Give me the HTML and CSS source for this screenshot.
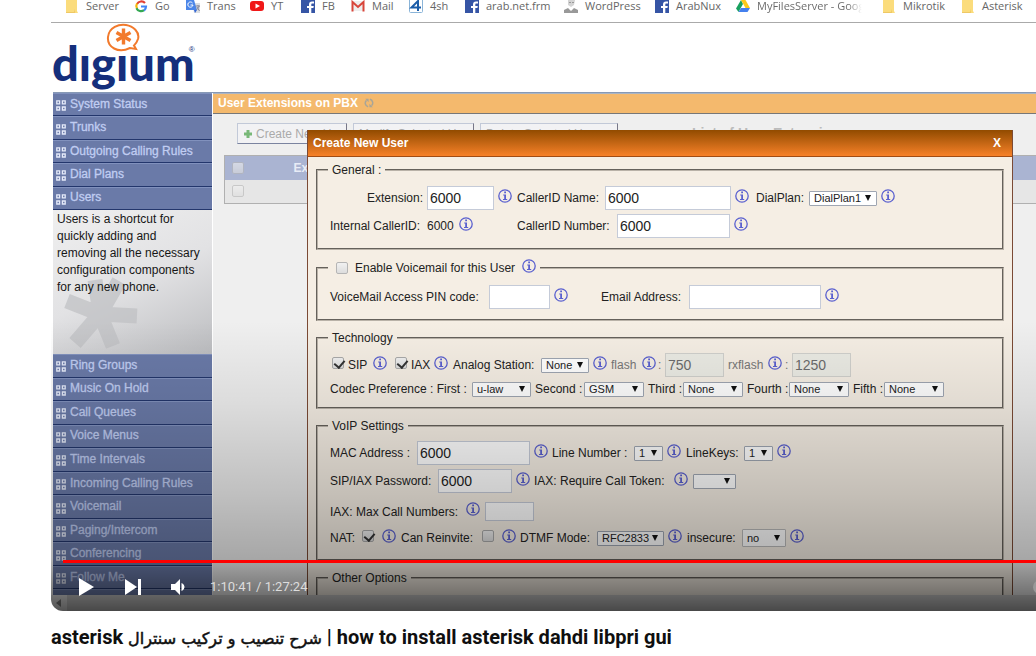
FILE: index.html
```html
<!DOCTYPE html>
<html lang="en">
<head>
<meta charset="utf-8">
<title>asterisk dahdi libpri gui</title>
<link rel="stylesheet" href="styles.css">
</head>
<body>
<svg class="defs" aria-hidden="true">
  <symbol id="info" viewBox="0 0 14 14"><circle cx="7" cy="7" r="6.200" fill="none" stroke="#5a60cf" stroke-width="1.300"/><path d="M6.200 2.600h1.800v1.600H6.200zM5.200 5.400H8v4.700h1.200v1H5v-1h1.200V6.400h-1z" fill="#5a60cf"/></symbol>
  <symbol id="dots" viewBox="0 0 10 11"><path d="M.8 .8h2.800v3H.8zM6.400 .8h2.800v3H6.400zM.8 7h2.800v3H.8zM6.400 7h2.800v3H6.400z" fill="none" stroke="#e6ebfa" stroke-width="1.300"/></symbol>
  <symbol id="folder" viewBox="0 0 14 14"><path d="M1 0h11v11l1 2H1z" fill="#fbdc7c"/><path d="M10 9v4H1V12h8z" fill="#eec865"/></symbol>
  <symbol id="fb" viewBox="0 0 14 14"><path d="M0 0h14v13H0z" fill="#3655a5"/><path d="M8 13V8H6V6h2V4.500C8 2.500 9 1.500 11 1.500h2v2h-1.500c-1 0-1.200.4-1.200 1.200V6h2.500l-.4 2h-2.100v5z" fill="#fff"/></symbol>
</svg>
<main>
<section class="player">
  <div class="screen">
    <nav class="bookmarks">
      <a href="#"><svg><use href="#folder"/></svg>Server</a>
      <a href="#"><svg viewBox="0 0 14 14"><path d="M11 3A5 5 0 0 0 3 4" fill="none" stroke="#e34133" stroke-width="2.200"/><path d="M3 3.500a5 5 0 0 0 0 5" fill="none" stroke="#f5b80b" stroke-width="2.200"/><path d="M2.500 8.200a5 5 0 0 0 7.500 2" fill="none" stroke="#34a853" stroke-width="2.200"/><path d="M7 6.500h5c0 2-.6 3-2 4" fill="none" stroke="#4285f4" stroke-width="2.200"/></svg>Go</a>
      <a href="#"><svg viewBox="0 0 14 14"><path d="M6 3h8v10H8z" fill="#dcdfe3"/><path d="M0 0h8l3 10H0z" fill="#4c86e8"/><path d="M6.500 3A2.600 2.600 0 1 0 7 5H4.500" fill="none" stroke="#fff"/><path d="M8 10h3l-2 3z" fill="#3367d6"/><path d="M9.500 6H14M12 5v1m1 0c0 2-2 3-2.500 4m.5-3 2.500 4" fill="none" stroke="#889"/></svg>Trans</a>
      <a href="#"><svg viewBox="0 0 14 14"><rect y="1" width="14" height="10" rx="3" fill="#f01818"/><path d="M5.500 3.500v5L10 6z" fill="#fff"/></svg>YT</a>
      <a href="#"><svg><use href="#fb"/></svg>FB</a>
      <a href="#"><svg viewBox="0 0 14 14"><path d="M1 1h12v10H1z" fill="#eee"/><path d="M1.500 11.500V2L7 7l5.500-5v9.500" fill="none" stroke="#d8453a" stroke-width="2"/></svg>Mail</a>
      <a href="#"><svg viewBox="0 0 14 14"><rect x=".5" y="-3" width="13" height="15.500" rx="1" fill="#fff" stroke="#8ab4d8"/><path d="M9 11V1L2.500 7.500H12" fill="none" stroke="#1c5da8" stroke-width="2"/></svg>4sh</a>
      <a href="#"><svg><use href="#fb"/></svg>arab.net.frm</a>
      <a href="#"><svg viewBox="0 0 14 14"><path d="M4 0h7l-1 5-3 2-3-2z" fill="#d4d4d4"/><path d="M0 13V10l4-2 3 3 3-3 4 2v3z" fill="#999"/><path d="M5 2.500h2m1 0h2" stroke="#999"/></svg>WordPress</a>
      <a href="#"><svg><use href="#fb"/></svg>ArabNux</a>
      <a href="#"><svg viewBox="0 0 14 14"><path d="M5 0 0 8.500 2.500 12 7 4z" fill="#19a15f"/><path d="M5 0h4.500l4.500 8H9.500z" fill="#fbc91b"/><path d="M5 8h9l-2.500 4h-9z" fill="#4480ee"/></svg><span class="fade">MyFilesServer - Goog</span></a>
      <a href="#"><svg><use href="#folder"/></svg>Mikrotik</a>
      <a href="#"><svg><use href="#folder"/></svg>Asterisk</a>
    </nav>
    <header class="brand">
      <svg class="bubble" viewBox="0 0 34 30"><path d="M24 25C12 31 1 24 2 14S13 1 20 2s14 7 12 14c-1 3-2 5-4 6.500l2 3.500z" fill="#fff" stroke="#f27a2c" stroke-width="2"/><path d="M17.500 5.500v16M10.500 9.500l14 8M10.500 17.500l14-8" stroke="#f27a2c" stroke-width="3.400"/></svg>
      <span class="wordmark">dıgıum</span><span class="reg">®</span>
    </header>
    <div class="app">
      <aside class="sidebar">
        <nav class="menu menu-top">
          <a href="#"><svg><use href="#dots"/></svg>System Status</a>
          <a href="#"><svg><use href="#dots"/></svg>Trunks</a>
          <a href="#"><svg><use href="#dots"/></svg>Outgoing Calling Rules</a>
          <a href="#"><svg><use href="#dots"/></svg>Dial Plans</a>
          <a href="#"><svg><use href="#dots"/></svg>Users</a>
        </nav>
        <div class="about">
          <svg class="star" viewBox="0 0 80 76"><path d="M39 37 58 4M39 37 6 24M39 37l37 2M39 37 14 66M39 37l13 32M39 37 34 3" stroke="#bfc0c3" stroke-width="15"/></svg>
          <p>Users is a shortcut for quickly adding and removing all the necessary configuration components for any new phone.</p>
        </div>
        <nav class="menu menu-rest">
          <a href="#"><svg><use href="#dots"/></svg>Ring Groups</a>
          <a href="#"><svg><use href="#dots"/></svg>Music On Hold</a>
          <a href="#"><svg><use href="#dots"/></svg>Call Queues</a>
          <a href="#"><svg><use href="#dots"/></svg>Voice Menus</a>
          <a href="#"><svg><use href="#dots"/></svg>Time Intervals</a>
          <a href="#"><svg><use href="#dots"/></svg>Incoming Calling Rules</a>
          <a href="#"><svg><use href="#dots"/></svg>Voicemail</a>
          <a href="#"><svg><use href="#dots"/></svg>Paging/Intercom</a>
          <a href="#"><svg><use href="#dots"/></svg>Conferencing</a>
          <a href="#"><svg><use href="#dots"/></svg>Follow Me</a>
          <a href="#"></a>
        </nav>
      </aside>
      <div class="page">
        <h2 class="page-title">User Extensions on PBX <svg viewBox="0 0 12 12"><path d="M5 10.500A4.500 4.500 0 0 1 3 2.800M7 1.500a4.500 4.500 0 0 1 2 7.700" fill="none" stroke="#a9a597" stroke-width="1.800"/><path d="M1.500 1h4v4zM10.500 11h-4V7z" fill="#a9a597"/></svg></h2>
        <div class="toolbar">
          <button type="button"><svg viewBox="0 0 10 10"><path d="M5 1v8M1 5h8" stroke="#78b878" stroke-width="3"/></svg>Create New User</button>
          <button type="button">Modify Selected Users</button>
          <button type="button">Delete Selected Users</button>
          <strong>List of User Extensions</strong>
        </div>
        <table class="list">
          <tr><th><input type="checkbox" aria-label="Select all"></th><th>Extension</th></tr>
          <tr><td><input type="checkbox" aria-label="Select row"></td><td></td></tr>
        </table>
      </div>
    </div>
    <form class="dialog">
      <div class="dialog-bar"><span>Create New User</span><button type="button">X</button></div>
      <fieldset class="general">
        <legend>General :</legend>
        <div class="row g1">
          <label class="right" for="ext">Extension:</label><input id="ext" value="6000"><svg class="info"><use href="#info"/></svg>
          <label for="cname">CallerID Name:</label><input id="cname" value="6000"><svg class="info"><use href="#info"/></svg>
          <label for="dp">DialPlan:</label><span class="pick"><select id="dp"><option>DialPlan1</option></select></span><svg class="info"><use href="#info"/></svg>
        </div>
        <div class="row g2">
          <span>Internal CallerID:</span><span>6000</span><svg class="info"><use href="#info"/></svg>
          <label for="cnum">CallerID Number:</label><input id="cnum" value="6000"><svg class="info"><use href="#info"/></svg>
        </div>
      </fieldset>
      <fieldset class="voicemail">
        <legend><input type="checkbox" id="vm"><label for="vm">Enable Voicemail for this User</label><svg class="info"><use href="#info"/></svg></legend>
        <div class="row v1">
          <label for="pin">VoiceMail Access PIN code:</label><input id="pin"><svg class="info"><use href="#info"/></svg>
          <label for="mail">Email Address:</label><input id="mail"><svg class="info"><use href="#info"/></svg>
        </div>
      </fieldset>
      <fieldset class="tech">
        <legend>Technology</legend>
        <div class="row t1">
          <input type="checkbox" id="sip" checked><label for="sip">SIP</label><svg class="info"><use href="#info"/></svg>
          <input type="checkbox" id="iax" checked><label for="iax">IAX</label><svg class="info"><use href="#info"/></svg>
          <label for="analog">Analog Station:</label><span class="pick"><select id="analog"><option>None</option></select></span><svg class="info"><use href="#info"/></svg>
          <label class="dim" for="flash">flash</label><svg class="info"><use href="#info"/></svg><span class="dim">:</span><input id="flash" value="750" disabled>
          <label class="dim" for="rx">rxflash</label><svg class="info"><use href="#info"/></svg><span class="dim">:</span><input id="rx" value="1250" disabled>
        </div>
        <div class="row short t2">
          <label for="c1">Codec Preference : First :</label><span class="pick"><select id="c1"><option>u-law</option></select></span>
          <label for="c2">Second :</label><span class="pick"><select id="c2"><option>GSM</option></select></span>
          <label for="c3">Third :</label><span class="pick"><select id="c3"><option>None</option></select></span>
          <label for="c4">Fourth :</label><span class="pick"><select id="c4"><option>None</option></select></span>
          <label for="c5">Fifth :</label><span class="pick"><select id="c5"><option>None</option></select></span>
        </div>
      </fieldset>
      <fieldset class="voip">
        <legend>VoIP Settings</legend>
        <div class="row p1">
          <label for="mac">MAC Address :</label><input id="mac" value="6000"><svg class="info"><use href="#info"/></svg>
          <label for="line">Line Number :</label><span class="pick"><select id="line"><option>1</option></select></span><svg class="info"><use href="#info"/></svg>
          <label for="keys">LineKeys:</label><span class="pick"><select id="keys"><option>1</option></select></span><svg class="info"><use href="#info"/></svg>
        </div>
        <div class="row p2">
          <label for="pw">SIP/IAX Password:</label><input id="pw" value="6000"><svg class="info"><use href="#info"/></svg>
          <label for="tok">IAX: Require Call Token:</label><svg class="info"><use href="#info"/></svg><span class="pick"><select id="tok"><option></option></select></span>
        </div>
        <div class="row tall p3">
          <label for="max">IAX: Max Call Numbers:</label><svg class="info"><use href="#info"/></svg><input class="small" id="max">
        </div>
        <div class="row short p4">
          <label for="nat">NAT:</label><input type="checkbox" id="nat" checked><svg class="info"><use href="#info"/></svg>
          <label for="re">Can Reinvite:</label><input type="checkbox" id="re"><svg class="info"><use href="#info"/></svg>
          <label for="dtmf">DTMF Mode:</label><span class="pick"><select id="dtmf"><option>RFC2833</option></select></span><svg class="info"><use href="#info"/></svg>
          <label for="ins">insecure:</label><span class="pick"><select class="high" id="ins"><option>no</option></select></span><svg class="info"><use href="#info"/></svg>
        </div>
      </fieldset>
      <fieldset class="other"><legend>Other Options</legend></fieldset>
    </form>
  </div>
  <div class="scroll"><svg viewBox="0 0 16 16"><path d="M10 4v8L5 8z" fill="#888"/></svg><div></div></div>
  <div class="chrome">
    <div class="progress"></div>
    <div class="controls">
      <button type="button" aria-label="Play"><svg viewBox="0 0 16 18"><path d="M0 0v18l15-9z" fill="#fff"/></svg></button>
      <button type="button" aria-label="Next"><svg viewBox="0 0 16 18"><path d="M0 1v16l12-8zM13 1h3v16h-3z" fill="#fff"/></svg></button>
      <button type="button" aria-label="Mute"><svg viewBox="0 0 16 18"><path d="M0 6h4l5-5v16l-5-5H0zM10.500 5c4 2 4 6 0 8z" fill="#fff"/></svg></button>
      <span class="time">1:10:41 / 1:27:24</span>
      <span class="knob"></span>
    </div>
  </div>
</section>
<h1>asterisk <span lang="ar">شرح تنصيب و تركيب سنترال</span> | how to install asterisk dahdi libpri gui</h1>
</main>
</body>
</html>
```
FILE: styles.css
```css
* { box-sizing: border-box; }
body { margin: 0; background: #fff; font: 12px/16px "Liberation Sans", sans-serif; color: #222; overflow: hidden; }
main { padding-left: 51px; }
a { color: inherit; text-decoration: none; }
button { font: inherit; margin: 0; }
svg { display: block; flex: none; }
.defs { position: absolute; width: 0; height: 0; }

.player { position: relative; display: flex; flex-direction: column; height: calc(100vh - 45px); border-bottom-left-radius: 12px; overflow: hidden; }
.screen { position: relative; flex: 1; min-height: 0; display: flex; flex-direction: column; overflow: hidden; }

.bookmarks { flex: none; display: grid; grid-template-columns: 69px 52px 64px 51px 50px 58px 56px 99px 91px 81px 146px 79px 76px; height: 23px; padding-left: 14px; border-bottom: 1px solid #aaa; font: 11px/12px "Open Sans", sans-serif; color: #666; white-space: nowrap; }
.bookmarks a { display: flex; align-items: flex-start; gap: 7px; height: 14px; }
.bookmarks svg { width: 14px; height: 14px; }
.fade { height: 14px; overflow: hidden; color: transparent; background: linear-gradient(90deg, #666 85%, #fff 98%); background-clip: text; }

.brand { flex: none; position: relative; height: 69px; padding-left: 1px; display: flex; color: #152f7c; }
.wordmark { font: 900 47px/56px Lato, sans-serif; padding-top: 12px; }
.reg { font-size: 8px; line-height: 10px; padding-top: 22px; margin-left: -6px; }
.bubble { position: absolute; left: 55px; top: 0; width: 34px; height: 30px; z-index: 1; }

.app { flex: 1; min-height: 0; display: flex; margin-left: 2px; border-top: 1px solid #8799b5; }
.sidebar { flex: none; width: 160px; border-right: 1px solid #fff; }
.menu { display: flex; flex-direction: column; color: #c0cdf2; -webkit-text-stroke: 0.3px #c0cdf2; }
.menu-top { height: 117px; }
.menu-rest { height: 259px; }
.menu a { flex: 1; display: flex; align-items: center; gap: 4px; padding: 0 0 2px 3px; background: #6a7aa8; border-top: 1px solid #8191bd; border-bottom: 1px solid #23366c; }
.menu svg { width: 10px; height: 11px; margin-top: 4px; }
.about { position: relative; height: 144px; background: linear-gradient(155deg, #efefef, #e2e2e4 50%, #bcbdc0); color: #161616; line-height: 17px; }
.about p { position: relative; margin: 0; padding: 1px 4px; }
.star { position: absolute; left: 8px; top: 67px; width: 80px; height: 76px; opacity: .7; }

.page { flex: 1; min-width: 0; background: #efefef; overflow: hidden; }
.page-title { display: flex; align-items: center; gap: 6px; height: 21px; margin: 0; padding: 0 0 2px 5px; background: #f4b96d; border-top: 1px solid #aab5c4; border-bottom: 1px solid #777; font-size: 12px; color: #fff; }
.page-title svg { width: 10px; height: 10px; }
.toolbar { display: flex; gap: 6px; padding: 9px 0 0 24px; height: 41px; }
.toolbar button { display: flex; align-items: center; gap: 3px; height: 21px; padding: 0 5px; white-space: nowrap; overflow: hidden; color: #aaa; background: #f2f2f4; border: 1px solid #c2c9d8; border-right-color: #778; border-bottom-color: #7b84a0; }
.toolbar button:nth-child(1) { width: 110px; }
.toolbar button:nth-child(2) { width: 121px; }
.toolbar button:nth-child(3) { width: 138px; }
.toolbar svg { width: 10px; height: 10px; }
.toolbar strong { margin-left: 68px; padding-top: 2px; font-size: 14px; color: #bbb; }
.list { width: calc(100% + 20px); margin-left: 11px; border: 1px solid #b0b0b0; border-collapse: collapse; table-layout: fixed; background: #e6e6e6; }
.list th, .list td { height: 24px; padding: 0 7px; text-align: left; }
.list th { background: #aab4d2; color: #e8ecf6; }
.list th:first-child { width: 62px; }
.list input { opacity: .6; }

.dialog { position: absolute; left: 256px; right: 23px; top: 130px; padding: 0 8px; background: #f5eee4; border: 1px solid #7b4a35; border-top: 0; }
.dialog-bar { display: flex; justify-content: space-between; align-items: center; height: 27px; margin: 0 -8px 5px; padding: 0 9px 0 5px; background: linear-gradient(#914b00, #f78128); border-bottom: 1px solid #a14c14; color: #fff; font-weight: bold; }
.dialog-bar button { background: none; border: 0; padding: 0 2px; color: #fff; }
fieldset { margin: 0; padding: 0 12px; border: 2px groove #b9b2a8; min-width: 0; }
legend { display: flex; align-items: center; height: 16px; padding: 0 4px 0 4px; margin-left: -2px; }
.general { padding-top: 6px; padding-bottom: 8px; }
.voicemail { margin-top: 10px; padding-top: 7px; padding-bottom: 8px; }
.voicemail legend { gap: 7px; padding-left: 8px; }
.tech { margin-top: 9px; padding-top: 5px; padding-bottom: 8px; }
.voip { margin-top: 9px; padding-top: 5px; padding-bottom: 11px; }
.other { margin-top: 9px; height: 90px; }

.row { display: grid; column-gap: 4px; align-items: center; height: 28px; white-space: nowrap; }
.row.short { height: 20px; }
.row.tall { height: 33px; }
.g1 { grid-template-columns: 93px 67px 15px 84px 126px 17px 49px 68px 16px; }
.g2 { grid-template-columns: 93px 28px 54px 96px 113px 16px; }
.v1 { grid-template-columns: 155px 61px 43px 84px 132px 16px; }
.t1 { grid-template-columns: 12px 21px 18px 12px 19px 15px 84px 48px 14px 27px 12px 3px 59px 36px 13px 3px 59px; padding-left: 2px; }
.t2 { grid-template-columns: 138px 59px 45px 60px 31px 60px 38px 60px 27px 60px; }
.p1 { grid-template-columns: 83px 113px 14px 78px 29px 15px 54px 29px 15px; }
.p2 { grid-template-columns: 104px 74px 14px 136px 15px 43px; }
.p3 { grid-template-columns: 132px 15px 49px; }
.p4 { grid-template-columns: 28px 16px 15px 77px 16px 14px 73px 67px 15px 51px 44px 15px; }
.right { text-align: right; }
.dim { color: #777; }

.info { width: 14px; height: 14px; margin-bottom: 5px; }
.row input { width: 100%; height: 24px; padding: 0 2px; border: 1px solid #c5cbd8; background: #fff; font: 14px/20px "Liberation Sans", sans-serif; color: #222; }
.row input.small { height: 19px; }
.row input:disabled { background: #ebebe4; color: #6c6c6c; border-color: #d0d0cc; }
input[type="checkbox"] { appearance: none; flex: none; display: block; width: 12px; height: 12px; margin: 0; padding: 0; border: 1px solid #b5b5b5; border-radius: 2px; background: linear-gradient(#f1f1f1, #ddd); }
.row input[type="checkbox"] { width: 12px; height: 12px; padding: 0; background: linear-gradient(#f1f1f1, #ddd); border-color: #aaa; margin-bottom: 4px; }
.row input[type="checkbox"]:checked::after { content: ""; display: block; width: 5px; height: 8px; margin: 0 0 0 3px; border: solid #333; border-width: 0 2px 2px 0; transform: rotate(40deg); }
.pick { position: relative; display: block; }
.pick::after { content: ""; position: absolute; right: 6px; top: 50%; margin-top: -3px; border: solid transparent; border-width: 6px 3px 0; border-top-color: #111; pointer-events: none; }
select { appearance: none; display: block; width: 100%; height: 15px; padding: 0 4px; border: 1px solid #9fa6b2; border-radius: 1px; background: #fff; font: 11px/13px "Liberation Sans", sans-serif; color: #222; }
select.high { height: 18px; border-color: #bbb; }

.scroll { flex: none; display: flex; height: 16px; background: #f1f1f1; }
.scroll svg { width: 16px; height: 16px; }
.scroll div { flex: 1; background: #d4d4d4; }
.chrome { position: absolute; left: 0; right: 0; bottom: 0; height: 290px; display: flex; flex-direction: column; justify-content: flex-end; pointer-events: none; background: linear-gradient(transparent, rgba(0,0,0,.08) 28%, rgba(0,0,0,.2) 60%, rgba(0,0,0,.3) 82%, rgba(0,0,0,.52) 94%, rgba(0,0,0,.66)); }
.progress { height: 3px; margin-left: 12px; background: #f00; }
.controls { display: flex; align-items: center; height: 48px; padding-left: 28px; overflow: hidden; }
.controls button { width: 16px; height: 18px; padding: 0; margin-right: 30px; border: 0; background: none; }
.controls button svg { width: 16px; height: 18px; }
.controls button:nth-child(3) { margin-right: 23px; }
.time { font: 13px/18px Roboto, sans-serif; color: #ddd; }
.knob { flex: none; width: 14px; height: 14px; margin: 0 -11px 0 auto; border-radius: 50%; background: #999; }
h1 { margin: 12px 0 0; font: bold 20px/28px Roboto, sans-serif; color: #0f0f0f; white-space: nowrap; }
h1 span { font: 16px/28px "DejaVu Sans", sans-serif; -webkit-text-stroke: 0.5px #0f0f0f; }
```
